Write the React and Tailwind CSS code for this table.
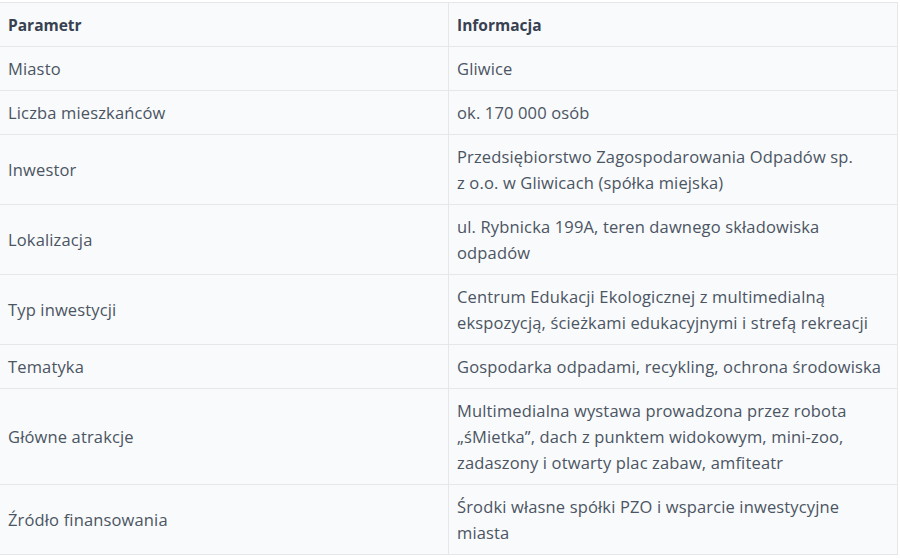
import React from "react";

const rows = [
  ["Miasto", "Gliwice"],
  ["Liczba mieszkańców", "ok. 170 000 osób"],
  ["Inwestor", "Przedsiębiorstwo Zagospodarowania Odpadów sp. z\u00a0o.o. w Gliwicach (spółka miejska)"],
  ["Lokalizacja", "ul. Rybnicka 199A, teren dawnego składowiska odpadów"],
  ["Typ inwestycji", "Centrum Edukacji Ekologicznej z multimedialną ekspozycją, ścieżkami edukacyjnymi i strefą rekreacji"],
  ["Tematyka", "Gospodarka odpadami, recykling, ochrona środowiska"],
  ["Główne atrakcje", "Multimedialna wystawa prowadzona przez robota „śMietka”, dach z punktem widokowym, mini-zoo, zadaszony i otwarty plac zabaw, amfiteatr"],
  ["Źródło finansowania", "Środki własne spółki PZO i wsparcie inwestycyjne miasta"],
];

export default function App() {
  return (
    <div className="bg-white w-[900px] h-[559px] overflow-hidden pt-[2px]" style={{ fontFamily: '"Open Sans", "Noto Sans", sans-serif' }}>
      <table className="ml-[-1px] w-[898px] border-collapse table-fixed bg-[#f9fafb] text-[16.5px] tracking-[0.15px] leading-[26px] text-[#4b5563]">
        <colgroup>
          <col className="w-[449px]" />
          <col className="w-[449px]" />
        </colgroup>
        <thead>
          <tr>
            <th className="border border-[#e5e7eb] px-[8px] py-[8.5px] text-left font-bold text-[15.5px] tracking-normal text-[#374151]">Parametr</th>
            <th className="border border-[#e5e7eb] px-[8px] py-[8.5px] text-left font-bold text-[15.5px] tracking-normal text-[#374151]">Informacja</th>
          </tr>
        </thead>
        <tbody>
          {rows.map(([a, b]) => (
            <tr key={a}>
              <td className="border border-[#e5e7eb] px-[8px] py-[8.5px] align-middle">{a}</td>
              <td className="border border-[#e5e7eb] px-[8px] py-[8.5px] align-middle">{b}</td>
            </tr>
          ))}
        </tbody>
      </table>
    </div>
  );
}
